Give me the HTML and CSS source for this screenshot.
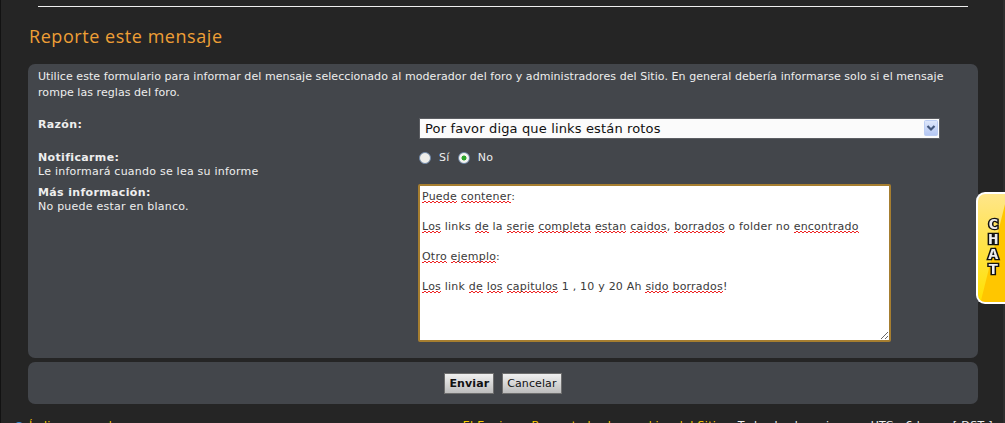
FILE: index.html
```html
<!DOCTYPE html>
<html lang="es">
<head>
<meta charset="utf-8">
<title>Reporte este mensaje</title>
<link rel="stylesheet" href="styles.css">
</head>
<body>
<div class="page">
  <hr class="rule">
  <h2 class="title">Reporte este mensaje</h2>
  <form class="panel main-panel">
    <p class="intro">Utilice este formulario para informar del mensaje seleccionado al moderador del foro y administradores del Sitio. En general debería informarse solo si el mensaje rompe las reglas del foro.</p>
    <div class="row row-reason">
      <div class="label"><strong>Razón:</strong></div>
      <div class="field select-wrap">
        <select class="select"><option>Por favor diga que links están rotos</option></select>
        <svg class="select-arrow" width="14" height="16" viewBox="0 0 14 16"><defs><linearGradient id="a" x1="0" y1="0" x2="0" y2="1"><stop offset="0" stop-color="#dfe8fb"/><stop offset="1" stop-color="#b3c6f3"/></linearGradient></defs><rect x=".5" y=".5" width="13" height="15" rx="1" fill="url(#a)" stroke="#bccdf3"/><path d="M3.5 6l3.5 3.5L10.500 6" fill="none" stroke="#44587c" stroke-width="2.200"/></svg>
      </div>
    </div>
    <div class="row row-notify">
      <div class="label"><strong>Notificarme:</strong><br>Le informará cuando se lea su informe</div>
      <div class="field radios">
        <label class="radio"><input type="radio" name="n"><span>Sí</span></label>
        <label class="radio"><input type="radio" name="n" checked><span>No</span></label>
      </div>
    </div>
    <div class="row row-info">
      <div class="label"><strong>Más información:</strong><br>No puede estar en blanco.</div>
      <div class="field">
        <div class="textarea" role="textbox"><u>Puede</u> <u>contener</u>:<br><br><u>Los</u> links <u>de</u> la <u>serie</u> <u>completa</u> <u>estan</u> <u>caidos</u>, <u>borrados</u> o folder no <u>encontrado</u><br><br><u>Otro</u> <u>ejemplo</u>:<br><br><u>Los</u> link <u>de</u> <u>los</u> <u>capitulos</u> 1 , 10 y 20 Ah <u>sido</u> <u>borrados</u>!</div>
      </div>
    </div>
  </form>
  <div class="panel actions">
    <button class="btn btn-primary" type="button">Enviar</button>
    <button class="btn" type="button">Cancelar</button>
  </div>
  <div class="footer">
    <div class="footer-left"><span class="home-dot"></span><a>Índice general</a></div>
    <div class="footer-right"><a>El Equipo</a> • <a>Borrar todas las cookies del Sitio</a> • <span>Todos los horarios son UTC - 6 horas [ DST ]</span></div>
  </div>
</div>
<aside class="chat"><span>C</span><span>H</span><span>A</span><span>T</span></aside>
</body>
</html>
```
FILE: styles.css
```css
* { box-sizing: border-box; }
html, body { margin: 0; height: 423px; overflow: hidden; }
html { background: #252525; }
body {
  background: #252525;
  border-left: 1px solid #121212;
  border-right: 2px solid #2e2e2e;
  font: 11px/14px "DejaVu Sans", Verdana, sans-serif;
  color: #eee;
}
.page { padding: 6px 25px 0 27px; }
.rule { margin: 0 10px; height: 1px; border: 0; background: #eee; }
.title {
  margin: 18px 0 17px 1px;
  font: 500 18px/22px "Open Sans", sans-serif;
  letter-spacing: .55px;
  color: #ee9f36;
}
.panel { background: #43464b; border-radius: 7px; }
.main-panel { height: 294px; padding: 5px 10px 0; }
.intro { margin: 0 0 18px; line-height: 16px; letter-spacing: .06px; }
.row { display: grid; grid-template-columns: 381px 1fr; }
.row-reason { height: 33px; margin-top: -1px; }
.row-notify { height: 35px; }
.label { letter-spacing: .23px; }
.label strong { letter-spacing: .35px; }
.select-wrap { position: relative; width: 521px; height: 21px; }
.select {
  appearance: none;
  display: block;
  width: 100%;
  height: 21px;
  padding: 0 5px;
  border: 1px solid #5c5e63;
  border-radius: 0;
  background: #fbfbfb;
  color: #111;
  font: 13px "DejaVu Sans", Verdana, sans-serif;
  letter-spacing: .15px;
}
.select-arrow { position: absolute; right: 2px; top: 2px; pointer-events: none; }
.radios { display: flex; gap: 8px; }
.radio { display: flex; align-items: center; gap: 8px; height: 14px; letter-spacing: .3px; }
.radio input {
  appearance: none;
  margin: 0;
  width: 12px;
  height: 12px;
  border-radius: 50%;
  border: 1px solid #6e87a8;
  background: #eeeeea;
}
.radio input:checked { background: radial-gradient(circle, #2ba32b 0 2.2px, #f3f3ef 2.8px); }
.textarea {
  width: 473px;
  height: 158px;
  margin: -2px 0 0 -1px;
  padding: 3px 2px;
  border: 2px solid #a67e30;
  border-radius: 2px;
  background: #fff;
  color: #3a3a3a;
  line-height: 15px;
  letter-spacing: .21px;
  resize: both;
  overflow: hidden;
}
.textarea u {
  text-decoration: none;
  background-image: linear-gradient(90deg, #e22 50%, transparent 50%), linear-gradient(90deg, transparent 50%, #e22 50%);
  background-size: 4px 1px;
  background-position: 0 100%, 0 calc(100% - 1px);
  background-repeat: repeat-x;
}
.actions {
  display: flex;
  justify-content: center;
  gap: 8px;
  height: 42px;
  margin-top: 4px;
  padding-top: 11px;
}
.btn {
  height: 21px;
  padding: 0 4px;
  border: 1px solid #6e6e6e;
  border-radius: 0;
  background: linear-gradient(#f0f0f0, #bdbdbd);
  color: #111;
  font: 11px "DejaVu Sans", Verdana, sans-serif;
  letter-spacing: .1px;
}
.btn-primary { font-weight: 700; }
.footer { display: flex; justify-content: space-between; margin: 15px -15px 0 0; letter-spacing: .34px; }
.footer-left { display: flex; gap: 6px; align-items: center; }
.footer-left a { color: #ffcc00; }
.home-dot { width: 8px; height: 8px; margin-left: -13px; border-radius: 50%; background: #3a8fd8; }
.footer-right a { color: #ffcc00; }
.chat {
  position: fixed;
  left: 976px;
  top: 192px;
  width: 29px;
  height: 112px;
  padding-top: 23px;
  border: 2px solid #fff;
  border-right: 0;
  border-radius: 9px 0 0 9px;
  background: linear-gradient(104deg, transparent calc(50% + 2px), #ffc600 calc(50% + 3px)), linear-gradient(#ffe68a, #ffe000);
  display: flex;
  flex-direction: column;
  align-items: flex-start;
}
.chat span {
  margin-left: 10px;
  font: 700 14px/15px "DejaVu Sans Mono", monospace;
  color: #eee;
  -webkit-text-stroke: 2.5px #111;
  paint-order: stroke fill;
  transform: scaleX(1.25);
  transform-origin: 0 50%;
}
```
